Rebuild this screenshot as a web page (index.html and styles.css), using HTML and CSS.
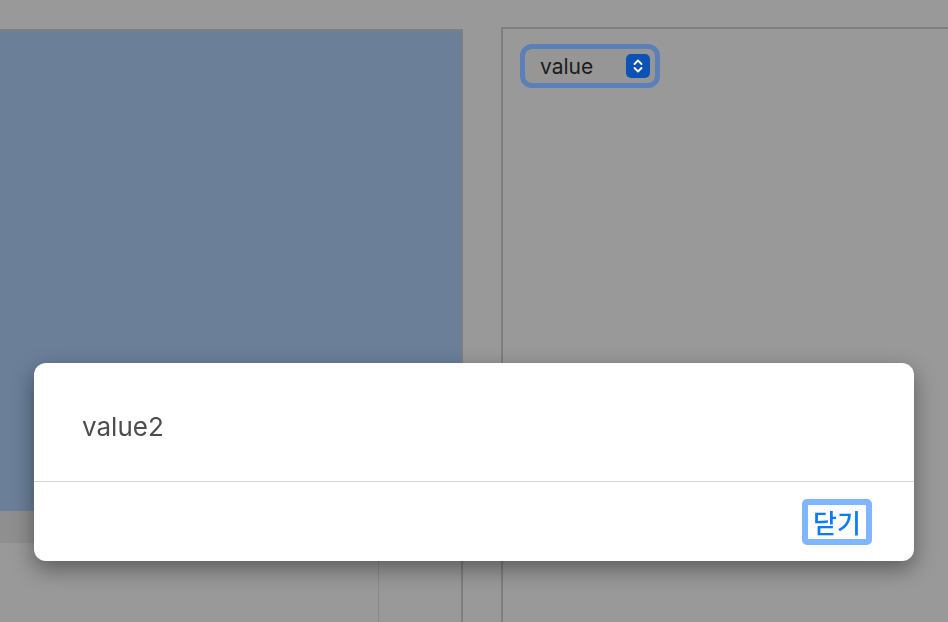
FILE: index.html
```html
<!DOCTYPE html>
<html lang="ko">
<head>
    <meta charset="UTF-8">
    <meta name="viewport" content="width=device-width, initial-scale=1.0">
    <title>Popup</title>
    <link rel="stylesheet" href="styles.css">
</head>
<body>
    <div class="screen">
        <div class="left-col">
            <div class="blue-box"></div>
            <div class="strip"></div>
            <div class="lower">
                <div class="lower-cell"></div>
            </div>
        </div>
        <div class="right-panel">
            <div class="select">
                <span class="select-text">value</span>
                <span class="stepper">
                    <svg width="14" height="18" viewBox="0 0 14 18">
                        <path d="M3.5 7 L7 3.5 L10.5 7" fill="none" stroke="#fff" stroke-width="1.8" stroke-linecap="round" stroke-linejoin="round"/>
                        <path d="M3.5 11 L7 14.5 L10.5 11" fill="none" stroke="#fff" stroke-width="1.8" stroke-linecap="round" stroke-linejoin="round"/>
                    </svg>
                </span>
            </div>
        </div>
    </div>

    <div class="dialog">
        <div class="dialog-body">value2</div>
        <div class="dialog-footer">
            <button class="close-button">닫기</button>
        </div>
    </div>
</body>
</html>
```

FILE: styles.css
```css
body {
    margin: 0;
    background-color: #999999;
    font-family: Inter, "Liberation Sans", "Noto Sans CJK KR", sans-serif;
    overflow: hidden;
    height: 622px;
}
.screen {
    display: flex;
    gap: 38px;
    height: 100%;
}
.left-col {
    width: 463px;
    margin-top: 29px;
    display: flex;
    flex-direction: column;
}
.blue-box {
    height: 480px;
    background: #6b7f99;
    border-top: 2px solid #7f7f7f;
    border-right: 2px solid #7f7f7f;
}
.strip {
    height: 32px;
    background: #8f8f8f;
    border-right: 2px solid #7f7f7f;
}
.lower {
    flex: 1;
    border-right: 2px solid #7f7f7f;
}
.lower-cell {
    width: 378px;
    height: 100%;
    border-right: 1px solid #8a8a8a;
}
.right-panel {
    flex: 1;
    margin-top: 27px;
    border-top: 2px solid #7f7f7f;
    border-left: 2px solid #7f7f7f;
    padding: 15px 0 0 17px;
}
.select {
    box-sizing: content-box;
    width: 110px;
    height: 34px;
    border: 5px solid #5b80b8;
    border-radius: 12px;
    background: #969696;
    display: flex;
    align-items: center;
    justify-content: space-between;
    padding: 0 5px 0 15px;
}
.select-text {
    font-size: 21px;
    color: #1c1c1c;
}
.stepper {
    width: 24px;
    height: 24px;
    border-radius: 5px;
    background: #0d52b5;
    display: flex;
    align-items: center;
    justify-content: center;
}
.dialog {
    position: fixed;
    left: 34px;
    top: 363px;
    width: 880px;
    height: 198px;
    background: #ffffff;
    border-radius: 12px;
    box-shadow: 0 8px 22px rgba(0, 0, 0, 0.4);
    display: flex;
    flex-direction: column;
}
.dialog-body {
    height: 119px;
    flex-shrink: 0;
    display: flex;
    align-items: center;
    padding: 8px 0 0 48px;
    box-sizing: border-box;
    font-size: 26px;
    color: #4d4d4d;
    border-bottom: 1px solid #d5d5d5;
}
.dialog-footer {
    flex: 1;
    display: flex;
    align-items: center;
    justify-content: flex-end;
    padding-right: 42px;
}
.close-button {
    font-family: "Noto Sans CJK KR", sans-serif;
    font-size: 26px;
    font-weight: 500;
    color: #0a7aff;
    background: #ffffff;
    border: none;
    outline: 6px solid #80b5ff;
    outline-offset: -6px;
    border-radius: 5px;
    width: 70px;
    height: 46px;
    padding: 0;
    line-height: 1;
}
```
